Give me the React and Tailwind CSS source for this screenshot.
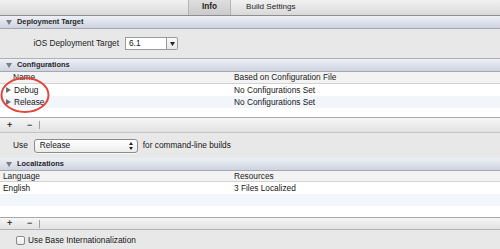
import React from "react";

function DownTri() {
  return (
    <svg width="6" height="5" viewBox="0 0 6 5" className="shrink-0">
      <path d="M0 0 L6 0 L3 5 Z" fill="#7a7d85" />
    </svg>
  );
}

function RightTri() {
  return (
    <svg width="5" height="6" viewBox="0 0 5 6" className="shrink-0">
      <path d="M0 0 L5 3 L0 6 Z" fill="#6f6f6f" />
    </svg>
  );
}

function SectionHeader({ title }) {
  return (
    <div className="h-[13px] flex items-center border-b border-[#a4a8b3] bg-linear-to-b from-[#eef0f7] to-[#cfd3df] pl-[6px]">
      <DownTri />
      <span className="ml-[5px] text-[7.4px] font-bold text-[#262626] leading-none">{title}</span>
    </div>
  );
}

function PlusMinusBar({ h }) {
  return (
    <div className={`${h} flex items-center border-t border-[#a9a9a9] bg-linear-to-b from-[#f6f6f6] to-[#e2e2e2]`}>
      <span className="ml-[7px] w-[7px] text-[9px] font-bold leading-none text-[#333]">+</span>
      <span className="ml-[13px] w-[7px] text-[9px] font-bold leading-none text-[#444]">−</span>
      <span className="ml-[5px] w-px h-[8px] bg-[#a0a0a0]" />
    </div>
  );
}

export default function App() {
  return (
    <div className="w-[500px] h-[249px] overflow-hidden bg-[#e8e8e8] font-['Liberation_Sans',Arial,sans-serif] text-[8.3px] text-[#161616] relative">
      {/* Top tab bar */}
      <div className="h-[16px] flex items-stretch border-b border-[#8e8e8e] bg-linear-to-b from-[#f1f1f1] to-[#d9d9d9]">
        <div className="w-[188px]" />
        <div className="w-[43px] flex items-center justify-center border-x border-[#b5b5b5] bg-linear-to-b from-[#dedede] to-[#cbcbcb]">
          <span className="font-bold text-[8.2px] text-[#1e1e1e] leading-none">Info</span>
        </div>
        <div className="flex items-center pl-[15px]">
          <span className="text-[8.1px] text-[#1e1e1e] leading-none">Build Settings</span>
        </div>
      </div>

      <SectionHeader title="Deployment Target" />

      <div className="h-[30px] flex items-center border-b border-[#b0b0b0]">
        <div className="w-[119px] text-right leading-none text-[#222]">iOS Deployment Target</div>
        <div className="ml-[6px] flex h-[13px]">
          <div className="w-[42px] bg-white border border-[#9a9a9a] flex items-center pl-[3px] leading-none">6.1</div>
          <div className="w-[11px] border border-l-0 border-[#9a9a9a] rounded-r-[2px] bg-linear-to-b from-[#fafafa] to-[#e6e6e6] flex items-center justify-center">
            <svg width="5" height="4" viewBox="0 0 5 4">
              <path d="M0 0 L5 0 L2.5 4 Z" fill="#222" />
            </svg>
          </div>
        </div>
      </div>

      <SectionHeader title="Configurations" />

      {/* Table header */}
      <div className="h-[12px] flex items-center border-b border-[#d2d2d2] bg-[#f3f3f3] leading-none text-[#222]">
        <span className="ml-[13px] w-[221px]">Name</span>
        <span>Based on Configuration File</span>
      </div>
      <div className="h-[12px] flex items-center bg-white leading-none">
        <span className="ml-[6px]"><RightTri /></span>
        <span className="ml-[3px] w-[220px]">Debug</span>
        <span>No Configurations Set</span>
      </div>
      <div className="h-[12px] flex items-center bg-[#f2f5fa] leading-none">
        <span className="ml-[6px]"><RightTri /></span>
        <span className="ml-[3px] w-[220px]">Release</span>
        <span>No Configurations Set</span>
      </div>
      <div className="h-[9px] bg-white" />

      <PlusMinusBar h="h-[15px]" />

      <div className="h-[26px] flex items-center border-t border-[#c4c4c4]">
        <span className="ml-[13px] leading-none">Use</span>
        <div className="ml-[6px] w-[104px] h-[14px] rounded-[3px] border border-[#8c8c8c] bg-linear-to-b from-[#ffffff] to-[#ececec] flex items-center pl-[5px] pr-[4px] shadow-[0_1px_0_#f8f8f8]">
          <span className="flex-1 leading-none">Release</span>
          <svg width="4" height="8" viewBox="0 0 4 8">
            <path d="M0 3 L2 0 L4 3 Z M0 5 L2 8 L4 5 Z" fill="#222" />
          </svg>
        </div>
        <span className="ml-[5px] leading-none">for command-line builds</span>
      </div>

      <SectionHeader title="Localizations" />

      <div className="h-[11px] flex items-center border-b border-[#d2d2d2] bg-[#f3f3f3] leading-none text-[#222]">
        <span className="ml-[3px] w-[231px]">Language</span>
        <span>Resources</span>
      </div>
      <div className="h-[12px] flex items-center bg-white leading-none">
        <span className="ml-[3px] w-[231px]">English</span>
        <span>3 Files Localized</span>
      </div>
      <div className="h-[12px] bg-[#f2f5fa]" />
      <div className="h-[11px] bg-white" />

      <PlusMinusBar h="h-[12px]" />

      <div className="h-[21px] flex items-center border-t border-[#b4b4b4]">
        <div className="ml-[16px] w-[9px] h-[9px] rounded-[2px] border border-[#8a8a8a] bg-linear-to-b from-[#ffffff] to-[#e9e9e9]" />
        <span className="ml-[3px] leading-none">Use Base Internationalization</span>
      </div>

      {/* Red annotation ellipse */}
      <svg className="absolute left-0 top-[76px]" width="54" height="40" viewBox="0 0 54 40">
        <ellipse cx="25" cy="19" rx="23.5" ry="17" fill="none" stroke="#e2463c" strokeWidth="2" />
      </svg>
    </div>
  );
}
